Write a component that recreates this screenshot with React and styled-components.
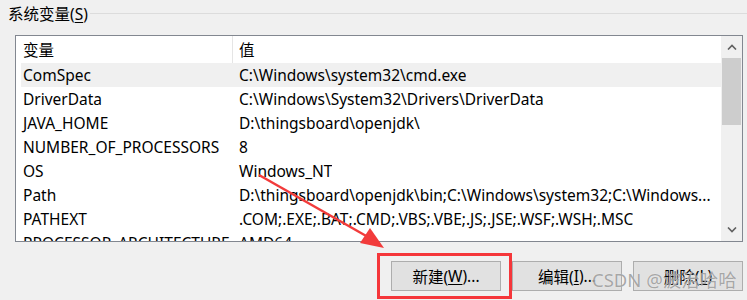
import React from "react";
import styled, { createGlobalStyle } from "styled-components";

const GlobalStyle = createGlobalStyle`
  html, body {
    margin: 0;
    padding: 0;
    background: #f0f0f0;
  }
  body {
    font-family: "Noto Sans", "Noto Sans CJK SC", sans-serif;
    font-size: 15.5px;
    color: #000;
  }
`;

const Page = styled.div`
  position: relative;
  width: 747px;
  height: 300px;
  overflow: hidden;
  background: #f0f0f0;
`;

const GroupHeader = styled.div`
  display: flex;
  align-items: center;
  height: 27px;
  padding-left: 8px;
`;

const GroupLabel = styled.span`
  line-height: 20px;
  padding-right: 2px;
  u {
    text-decoration-thickness: 1px;
    text-underline-offset: 2px;
  }
`;

const GroupLine = styled.div`
  flex: 1;
  border-top: 1px solid #dcdcdc;
  margin-top: -1px;
`;

const ListBox = styled.div`
  display: flex;
  margin: 8px 0 0 15px;
  width: 728px;
  height: 207px;
  box-sizing: border-box;
  border: 1px solid #828790;
  background: #fff;
`;

const ListBody = styled.div`
  flex: 1;
  overflow: hidden;
  padding-left: 5px;
`;

const Row = styled.div`
  display: flex;
  align-items: center;
  height: ${(p) => (p.$header ? 27 : 24)}px;
  background: ${(p) => (p.$selected ? "#f0f0f0" : "transparent")};
  white-space: nowrap;
`;

const NameCell = styled.div`
  width: 212px;
  padding-left: 2px;
  box-sizing: border-box;
  overflow: hidden;
  align-self: stretch;
  display: flex;
  align-items: center;
  border-right: ${(p) => (p.$header ? "1px solid #e5e5e5" : "1px solid transparent")};
`;

const ValueCell = styled.div`
  padding-left: 6px;
  overflow: hidden;
`;

const ScrollBar = styled.div`
  width: 21px;
  display: flex;
  flex-direction: column;
  align-items: center;
  background: #f0f0f0;
`;

const ScrollArrow = styled.div`
  height: 22px;
  width: 100%;
  display: flex;
  align-items: center;
  justify-content: center;
`;

const Thumb = styled.div`
  width: 19px;
  height: 67px;
  background: #cdcdcd;
`;

const Track = styled.div`
  flex: 1;
`;

const ButtonRow = styled.div`
  display: flex;
  justify-content: flex-end;
  gap: 11px;
  margin-top: 19px;
  padding-right: 4px;
`;

const Button = styled.div`
  width: 110px;
  height: 30px;
  box-sizing: border-box;
  border: 1px solid #adadad;
  background: #e1e1e1;
  display: flex;
  align-items: center;
  justify-content: center;
  u {
    text-underline-offset: 2px;
  }
`;

const Highlight = styled.div`
  position: absolute;
  left: 377px;
  top: 253px;
  width: 135px;
  height: 46px;
  box-sizing: border-box;
  border: 3px solid #f5363a;
`;

const Arrow = styled.svg`
  position: absolute;
  left: 0;
  top: 0;
  pointer-events: none;
`;

const Watermark = styled.div`
  position: absolute;
  left: 592px;
  top: 266px;
  font-size: 18.5px;
  color: rgba(140, 140, 140, 0.75);
  text-shadow: 0 0 1px rgba(255, 255, 255, 0.8);
  white-space: nowrap;
`;

const Chevron = ({ up }) => (
  <svg width="10" height="6" viewBox="0 0 10 6">
    <path
      d={up ? "M1 5.5 L5 1.5 L9 5.5" : "M1 0.5 L5 4.5 L9 0.5"}
      fill="none"
      stroke="#606060"
      strokeWidth="1.6"
    />
  </svg>
);

const vars = [
  ["ComSpec", "C:\\Windows\\system32\\cmd.exe"],
  ["DriverData", "C:\\Windows\\System32\\Drivers\\DriverData"],
  ["JAVA_HOME", "D:\\thingsboard\\openjdk\\"],
  ["NUMBER_OF_PROCESSORS", "8"],
  ["OS", "Windows_NT"],
  ["Path", "D:\\thingsboard\\openjdk\\bin;C:\\Windows\\system32;C:\\Windows..."],
  ["PATHEXT", ".COM;.EXE;.BAT;.CMD;.VBS;.VBE;.JS;.JSE;.WSF;.WSH;.MSC"],
  ["PROCESSOR_ARCHITECTURE", "AMD64"],
];

const App = () => {
  return (
    <Page>
      <GlobalStyle />
      <GroupHeader>
        <GroupLabel>
          系统变量(<u>S</u>)
        </GroupLabel>
        <GroupLine />
      </GroupHeader>
      <ListBox>
        <ListBody>
          <Row $header>
            <NameCell $header>变量</NameCell>
            <ValueCell>值</ValueCell>
          </Row>
          {vars.map(([name, value], i) => (
            <Row key={name} $selected={i === 0}>
              <NameCell>{name}</NameCell>
              <ValueCell>{value}</ValueCell>
            </Row>
          ))}
        </ListBody>
        <ScrollBar>
          <ScrollArrow>
            <Chevron up />
          </ScrollArrow>
          <Thumb />
          <Track />
          <ScrollArrow>
            <Chevron />
          </ScrollArrow>
        </ScrollBar>
      </ListBox>
      <ButtonRow>
        <Button>
          新建(<u>W</u>)...
        </Button>
        <Button>
          编辑(<u>I</u>)...
        </Button>
        <Button>
          删除(<u>L</u>)
        </Button>
      </ButtonRow>
      <Highlight />
      <Watermark>CSDN @波治哈哈</Watermark>
      <Arrow width="747" height="300">
        <line x1="259" y1="175" x2="368" y2="237" stroke="#f23b3b" strokeWidth="2.5" />
        <polygon points="384,248 360,243 370,228" fill="#f23b3b" />
      </Arrow>
    </Page>
  );
};

export default App;
